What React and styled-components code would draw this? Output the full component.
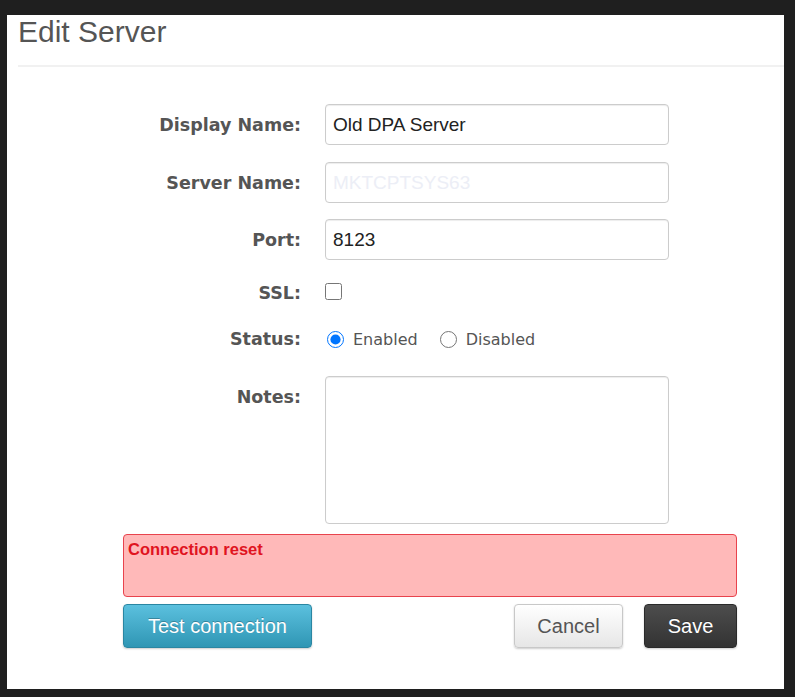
import React from "react";
import styled, { createGlobalStyle } from "styled-components";

const Global = createGlobalStyle`
  html, body {
    margin: 0;
    padding: 0;
    background: #1f1f1f;
  }
  body {
    padding: 15px 11px 8px 7px;
    font-family: "Liberation Sans", Arial, sans-serif;
  }
`;

const Panel = styled.div`
  background: #fff;
  width: 777px;
  height: 674px;
  box-sizing: border-box;
  padding-left: 11px;
`;

const Title = styled.h1`
  margin: 0;
  font-weight: normal;
  font-size: 30px;
  line-height: 33px;
  color: #555;
`;

const Divider = styled.div`
  margin-top: 17px;
  border-top: 2px solid #f1f1f1;
`;

const Form = styled.div`
  display: flex;
  flex-direction: column;
  padding-top: 37px;
  margin-left: -11px;
`;

const Field = styled.div`
  display: grid;
  grid-template-columns: 294px 344px;
  column-gap: 24px;
  align-items: ${(p) => (p.$top ? "start" : "center")};
  margin-top: ${(p) => p.$mt || 0}px;
`;

const Label = styled.label`
  text-align: right;
  font-family: "DejaVu Sans", Verdana, sans-serif;
  font-weight: bold;
  font-size: 17.5px;
  color: #555;
  padding-top: ${(p) => p.$pt || 0}px;
`;

const TextInput = styled.input`
  box-sizing: border-box;
  width: 344px;
  height: 41px;
  border: 1px solid #ccc;
  border-radius: 4px;
  box-shadow: inset 0 1px 1px rgba(0, 0, 0, 0.075);
  padding: 0 7px;
  font-family: "Liberation Sans", Arial, sans-serif;
  font-size: 19px;
  color: ${(p) => (p.$faint ? "#eceef6" : "#222")};
  outline: none;
`;

const TextArea = styled.textarea`
  box-sizing: border-box;
  width: 344px;
  height: 148px;
  border: 1px solid #ccc;
  border-radius: 4px;
  box-shadow: inset 0 1px 1px rgba(0, 0, 0, 0.075);
  resize: none;
  outline: none;
  margin: 0;
  display: block;
`;

const Check = styled.input`
  width: 17px;
  height: 17px;
  margin: 0;
  display: block;
`;

const RadioGroup = styled.div`
  display: flex;
  align-items: center;
`;

const RadioOption = styled.label`
  display: flex;
  align-items: center;
  gap: 9px;
  margin-right: 20px;
  font-family: "DejaVu Sans", Verdana, sans-serif;
  font-size: 16px;
  color: #555;
  input {
    width: 17px;
    height: 17px;
    margin: 0 0 0 2px;
  }
`;

const Bottom = styled.div`
  width: 614px;
  margin-left: 105px;
  margin-top: 10px;
`;

const Alert = styled.div`
  box-sizing: border-box;
  height: 63px;
  border: 1px solid #e8434d;
  border-radius: 4px;
  background: #ffb9b9;
  padding: 5px 4px;
  font-weight: bold;
  font-size: 16.5px;
  color: #e0141f;
`;

const Actions = styled.div`
  display: flex;
  justify-content: space-between;
  margin-top: 7px;
`;

const Group = styled.div`
  display: flex;
  gap: 21px;
`;

const variants = {
  info: `
    background: linear-gradient(#5bc0de, #2f96b4);
    border-color: #2a86a2;
    color: #fff;
    text-shadow: 0 -1px 0 rgba(0,0,0,0.25);
  `,
  plain: `
    background: linear-gradient(#ffffff, #e6e6e6);
    border-color: #c8c8c8;
    color: #555;
  `,
  inverse: `
    background: linear-gradient(#4d4d4d, #333333);
    border-color: #2a2a2a;
    color: #fff;
    text-shadow: 0 -1px 0 rgba(0,0,0,0.25);
  `,
};

const Button = styled.button`
  box-sizing: border-box;
  width: ${(p) => p.$w}px;
  height: 44px;
  border: 1px solid;
  border-radius: 4px;
  font-family: "Liberation Sans", Arial, sans-serif;
  font-size: 20px;
  box-shadow: 0 1px 2px rgba(0, 0, 0, 0.2);
  padding: 0;
  cursor: pointer;
  ${(p) => variants[p.$variant]}
`;

export default function App() {
  return (
    <>
      <Global />
      <Panel>
        <Title>Edit Server</Title>
        <Divider />
        <Form>
          <Field>
            <Label>Display Name:</Label>
            <TextInput defaultValue="Old DPA Server" />
          </Field>
          <Field $mt={17}>
            <Label>Server Name:</Label>
            <TextInput $faint defaultValue="MKTCPTSYS63" />
          </Field>
          <Field $mt={16}>
            <Label>Port:</Label>
            <TextInput defaultValue="8123" />
          </Field>
          <Field $top $mt={23}>
            <Label>SSL:</Label>
            <Check type="checkbox" />
          </Field>
          <Field $mt={26}>
            <Label>Status:</Label>
            <RadioGroup>
              <RadioOption>
                <input type="radio" name="status" defaultChecked />
                Enabled
              </RadioOption>
              <RadioOption>
                <input type="radio" name="status" />
                Disabled
              </RadioOption>
            </RadioGroup>
          </Field>
          <Field $top $mt={27}>
            <Label $pt={11}>Notes:</Label>
            <TextArea />
          </Field>
        </Form>
        <Bottom>
          <Alert>Connection reset</Alert>
          <Actions>
            <Button $variant="info" $w={189}>
              Test connection
            </Button>
            <Group>
              <Button $variant="plain" $w={109}>
                Cancel
              </Button>
              <Button $variant="inverse" $w={93}>
                Save
              </Button>
            </Group>
          </Actions>
        </Bottom>
      </Panel>
    </>
  );
}
